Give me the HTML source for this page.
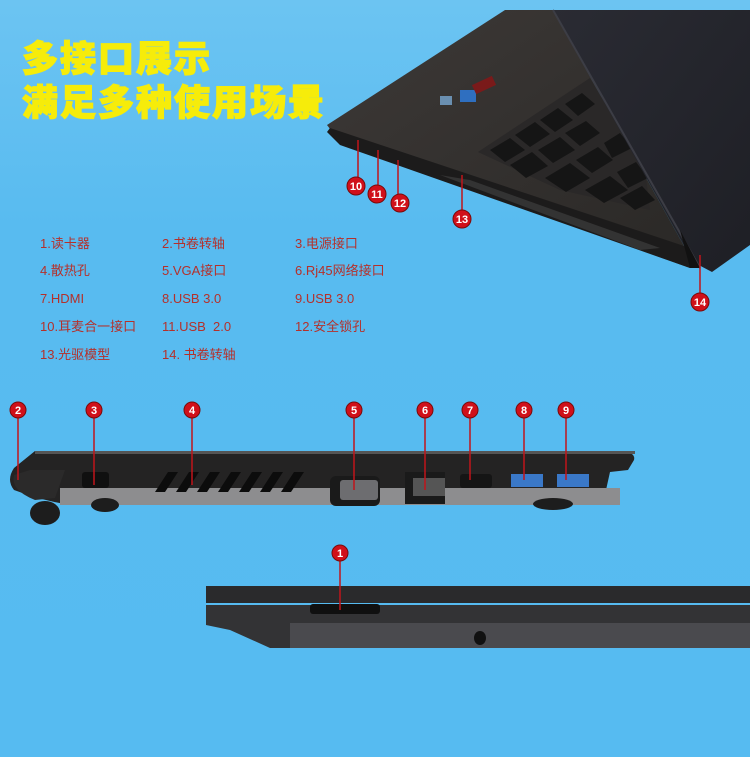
<!DOCTYPE html>
<html><head><meta charset="utf-8"><style>
html,body{margin:0;padding:0}
body{width:750px;height:757px;overflow:hidden;background:linear-gradient(180deg,#6cc4f2 0%,#58bbf0 30%,#56bbf1 100%);position:relative;font-family:"Liberation Sans","Noto Sans CJK SC",sans-serif}
.t{position:absolute;left:22px;color:#f6ec0a;font-weight:900;font-size:36px;letter-spacing:2px;line-height:40px;font-family:"Noto Sans CJK SC","WenQuanYi Zen Hei",sans-serif;-webkit-text-stroke:1.2px #f6ec0a}
.l{position:absolute;color:#b5302a;font-size:13px;line-height:16px;height:16px;font-family:"Liberation Sans","Noto Sans CJK SC",sans-serif;white-space:pre}
svg{position:absolute;left:0;top:0}
</style></head><body>
<svg width="750" height="757" viewBox="0 0 750 757">
<defs>
<linearGradient id="base" x1="0" y1="0" x2="1" y2="1"><stop offset="0" stop-color="#3d3937"/><stop offset="1" stop-color="#2a2826"/></linearGradient>
<linearGradient id="lid" x1="0" y1="0" x2="1" y2="1"><stop offset="0" stop-color="#2a2b33"/><stop offset="1" stop-color="#1e1f25"/></linearGradient>
</defs>
<polygon points="327,125 505,10 553,10 693,262 690,268 340,142" fill="url(#base)"/>
<polygon points="330,128 690,248 690,268 340,145 327,132" fill="#1c1b1b"/>
<polygon points="478,152 590,78 645,170 650,210 560,190" fill="#2a2828"/>
<g fill="#151515">
<polygon points="490,150 510,138 525,150 505,162"/>
<polygon points="515,135 535,122 550,134 530,147"/>
<polygon points="540,120 558,108 573,120 555,132"/>
<polygon points="565,104 582,93 595,104 578,116"/>
<polygon points="510,165 532,152 548,166 526,178"/>
<polygon points="538,150 560,137 575,150 553,163"/>
<polygon points="565,133 586,121 600,133 580,146"/>
<polygon points="545,178 570,163 590,178 566,192"/>
<polygon points="576,160 598,147 613,160 592,173"/>
<polygon points="604,143 620,133 632,148 612,158"/>
<polygon points="585,190 610,176 628,190 604,203"/>
<polygon points="617,172 636,162 648,178 628,188"/>
<polygon points="620,198 642,186 655,200 635,210"/>
</g>
<rect x="460" y="90" width="16" height="12" fill="#2f6fc0"/>
<rect x="440" y="96" width="12" height="9" fill="#6a8fb0"/>
<rect x="473" y="80" width="22" height="10" fill="#7a1a1a" transform="rotate(-25 484 85)"/>
<polygon points="440,175 470,180 660,248 640,250" fill="#333"/>
<polygon points="553,10 750,10 750,245 712,272 693,262" fill="url(#lid)"/>
<line x1="553" y1="10" x2="700" y2="268" stroke="#3c3d45" stroke-width="2"/>
<polygon points="680,230 700,268 690,268" fill="#111"/>
<path d="M35,451 L620,451 Q636,452 634,460 L628,470 L610,472 L606,490 L600,500 L70,505 Q40,500 14,490 Q6,480 14,468 Z" fill="#242323"/>
<rect x="60" y="488" width="560" height="17" fill="#8d8d8f"/>
<path d="M30,470 L65,470 L55,498 L35,500 Q10,490 14,475 Z" fill="#2b2a2a"/>
<rect x="35" y="451" width="600" height="3" fill="#555"/>
<ellipse cx="45" cy="513" rx="15" ry="12" fill="#1d1d1d"/>
<ellipse cx="105" cy="505" rx="14" ry="7" fill="#1d1d1d"/>
<ellipse cx="553" cy="504" rx="20" ry="6" fill="#1d1d1d"/>
<rect x="82" y="472" width="27" height="16" rx="3" fill="#101010"/>
<g fill="#0c0c0c">
<polygon points="155,492 168,472 178,472 165,492"/>
<polygon points="176,492 189,472 199,472 186,492"/>
<polygon points="197,492 210,472 220,472 207,492"/>
<polygon points="218,492 231,472 241,472 228,492"/>
<polygon points="239,492 252,472 262,472 249,492"/>
<polygon points="260,492 273,472 283,472 270,492"/>
<polygon points="281,492 294,472 304,472 291,492"/>
</g>
<rect x="330" y="476" width="50" height="30" rx="6" fill="#1a1a1a"/>
<rect x="340" y="480" width="38" height="20" rx="3" fill="#6d6d70"/>
<rect x="405" y="472" width="40" height="32" fill="#1a1a1a"/>
<rect x="413" y="478" width="32" height="18" fill="#555"/>
<rect x="460" y="474" width="32" height="14" rx="3" fill="#151515"/>
<rect x="511" y="474" width="32" height="13" fill="#3a78c8"/>
<rect x="557" y="474" width="32" height="13" fill="#3a78c8"/>
<rect x="206" y="586" width="544" height="17" fill="#2a2a2c"/>
<polygon points="206,605 750,605 750,648 270,648 230,630 206,625" fill="#333335"/>
<rect x="290" y="623" width="460" height="25" fill="#4a4a4e"/>
<rect x="310" y="604" width="70" height="10" rx="3" fill="#101010"/>
<ellipse cx="480" cy="638" rx="6" ry="7" fill="#111"/>
<g stroke="#c0141b" stroke-width="1.5">
<line x1="358" y1="140" x2="358" y2="180"/><line x1="378" y1="150" x2="378" y2="185"/><line x1="398" y1="160" x2="398" y2="195"/>
<line x1="462" y1="175" x2="462" y2="212"/><line x1="700" y1="255" x2="700" y2="295"/>
<line x1="18" y1="415" x2="18" y2="480"/><line x1="94" y1="415" x2="94" y2="485"/><line x1="192" y1="415" x2="192" y2="485"/>
<line x1="354" y1="415" x2="354" y2="490"/><line x1="425" y1="415" x2="425" y2="490"/><line x1="470" y1="415" x2="470" y2="480"/>
<line x1="524" y1="415" x2="524" y2="480"/><line x1="566" y1="415" x2="566" y2="480"/><line x1="340" y1="555" x2="340" y2="610"/>
</g>
<g fill="#d0101a" stroke="#7a0a0a" stroke-width="1">
<circle cx="356" cy="186" r="9"/><circle cx="377" cy="194" r="9"/><circle cx="400" cy="203" r="9"/>
<circle cx="462" cy="219" r="9"/><circle cx="700" cy="302" r="9"/>
<circle cx="18" cy="410" r="8"/><circle cx="94" cy="410" r="8"/><circle cx="192" cy="410" r="8"/><circle cx="354" cy="410" r="8"/>
<circle cx="425" cy="410" r="8"/><circle cx="470" cy="410" r="8"/><circle cx="524" cy="410" r="8"/><circle cx="566" cy="410" r="8"/>
<circle cx="340" cy="553" r="8"/>
</g>
<g fill="#fff" font-family="Liberation Sans" font-weight="bold" font-size="11" text-anchor="middle">
<text x="356" y="190">10</text><text x="377" y="198">11</text><text x="400" y="207">12</text><text x="462" y="223">13</text><text x="700" y="306">14</text>
<text x="18" y="414">2</text><text x="94" y="414">3</text><text x="192" y="414">4</text><text x="354" y="414">5</text>
<text x="425" y="414">6</text><text x="470" y="414">7</text><text x="524" y="414">8</text><text x="566" y="414">9</text><text x="340" y="557">1</text>
</g>
</svg>
<div class="t" style="top:36px">多接口展示</div>
<div class="t" style="top:80px">满足多种使用场景</div>
<div class="l" style="left:40px;top:236px">1.读卡器</div>
<div class="l" style="left:162px;top:236px">2.书卷转轴</div>
<div class="l" style="left:295px;top:236px">3.电源接口</div>
<div class="l" style="left:40px;top:263px">4.散热孔</div>
<div class="l" style="left:162px;top:263px">5.VGA接口</div>
<div class="l" style="left:295px;top:263px">6.Rj45网络接口</div>
<div class="l" style="left:40px;top:291px">7.HDMI</div>
<div class="l" style="left:162px;top:291px">8.USB 3.0</div>
<div class="l" style="left:295px;top:291px">9.USB 3.0</div>
<div class="l" style="left:40px;top:319px">10.耳麦合一接口</div>
<div class="l" style="left:162px;top:319px">11.USB  2.0</div>
<div class="l" style="left:295px;top:319px">12.安全锁孔</div>
<div class="l" style="left:40px;top:347px">13.光驱模型</div>
<div class="l" style="left:162px;top:347px">14. 书卷转轴</div>
</body></html>
